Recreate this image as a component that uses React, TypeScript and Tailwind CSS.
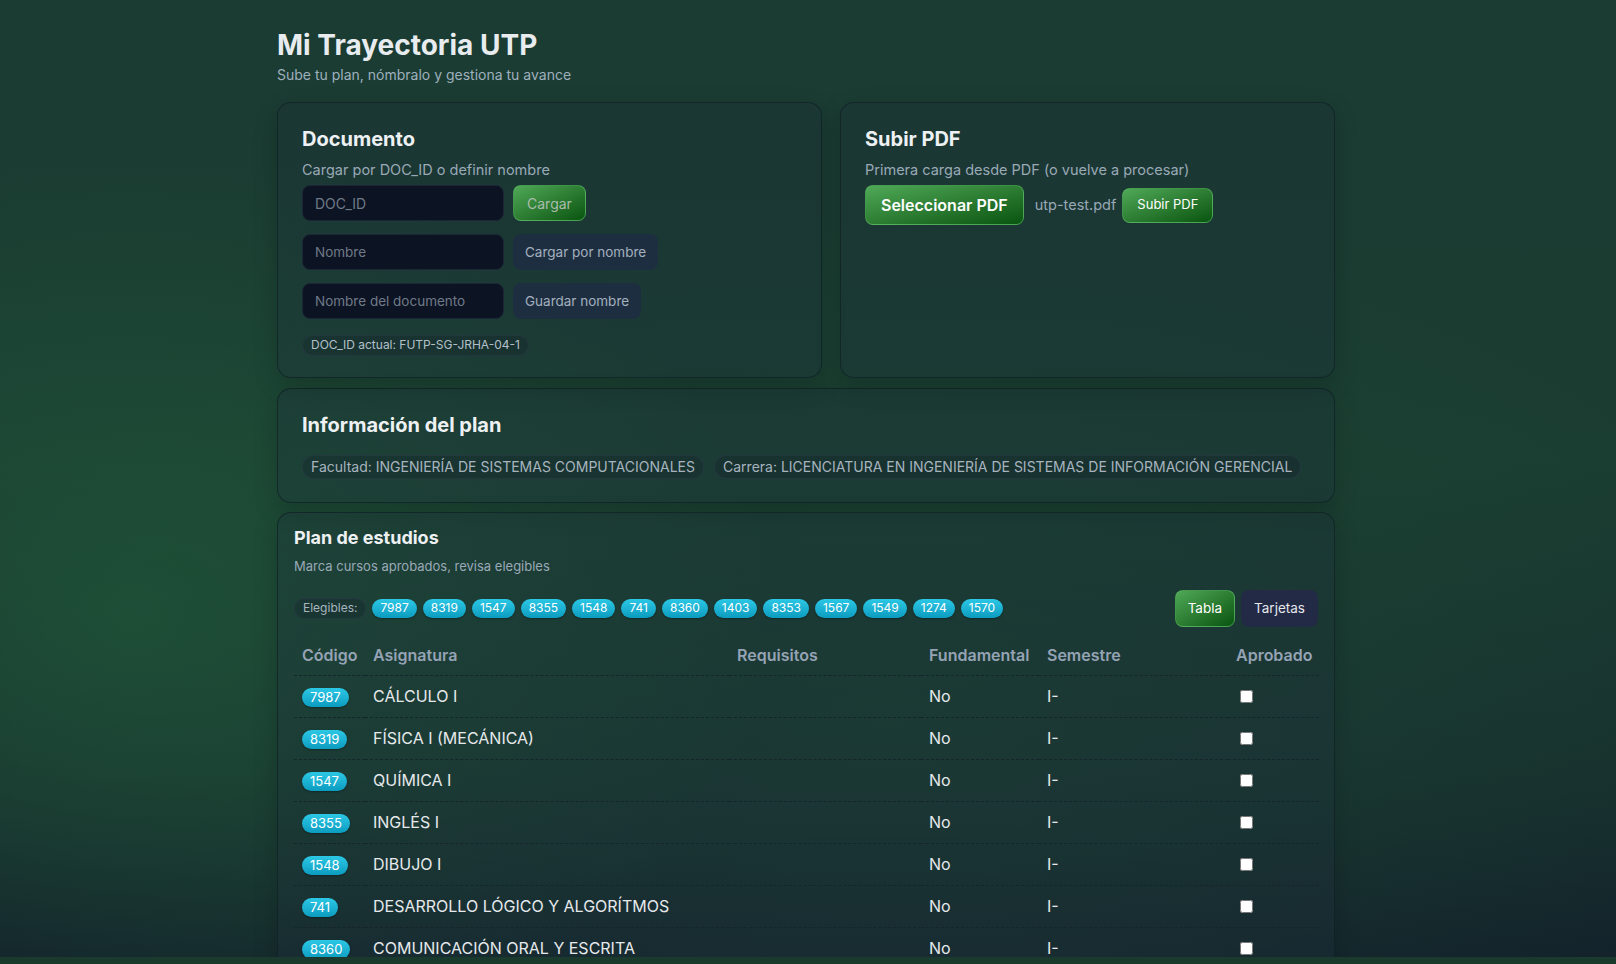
import { useState } from "react";

type Course = {
  code: string;
  name: string;
  fundamental: string;
  semester: string;
};

const courses: Course[] = [
  { code: "7987", name: "CÁLCULO I", fundamental: "No", semester: "I-" },
  { code: "8319", name: "FÍSICA I (MECÁNICA)", fundamental: "No", semester: "I-" },
  { code: "1547", name: "QUÍMICA I", fundamental: "No", semester: "I-" },
  { code: "8355", name: "INGLÉS I", fundamental: "No", semester: "I-" },
  { code: "1548", name: "DIBUJO I", fundamental: "No", semester: "I-" },
  { code: "741", name: "DESARROLLO LÓGICO Y ALGORÍTMOS", fundamental: "No", semester: "I-" },
  { code: "8360", name: "COMUNICACIÓN ORAL Y ESCRITA", fundamental: "No", semester: "I-" },
];

const elegibles = [
  "7987", "8319", "1547", "8355", "1548", "741", "8360",
  "1403", "8353", "1567", "1549", "1274", "1570",
];

const card =
  "rounded-[14px] border border-[#0f1f24]/70 bg-[#1e2f3b]/30 shadow-[0_8px_24px_rgba(0,0,0,0.18)]";

const chip =
  "inline-flex items-center rounded-full bg-gradient-to-b from-[#2cc8e6] to-[#0a9cc0] px-2 text-white shadow-[0_1px_2px_rgba(0,0,0,0.3)]";

const pill =
  "inline-flex items-center whitespace-nowrap rounded-full border border-[#2a3a44]/70 bg-[#15262a]/40";

const greenBtn =
  "rounded-lg border border-[#5cb865]/60 bg-gradient-to-br from-[#4fa957] to-[#07550f]";

export default function App() {
  const [approved, setApproved] = useState<Record<string, boolean>>({});
  const [view, setView] = useState<"tabla" | "tarjetas">("tabla");

  return (
    <div className="min-h-screen bg-[radial-gradient(ellipse_40%_45%_at_8%_60%,rgba(34,96,60,0.55)_0%,transparent_100%),radial-gradient(ellipse_60%_50%_at_55%_70%,rgba(30,80,55,0.45)_0%,transparent_100%),linear-gradient(180deg,#1b3c33_0%,#1a3d31_45%,#172f2e_75%,#111a29_100%)] pr-1 font-['Inter',sans-serif] text-[#e5e7eb]">
      <div className="mx-auto w-[1058px] pt-[28px] pb-10">
        <h1 className="text-[28px] font-bold leading-[35px] text-[#e8ecef]">Mi Trayectoria UTP</h1>
        <p className="mt-[2px] text-[14px] leading-5 text-[#9fb0bd]">
          Sube tu plan, nómbralo y gestiona tu avance
        </p>

        <div className="mt-[17px] grid grid-cols-[545px_495px] gap-[18px]">
          {/* Documento */}
          <section className={`${card} px-6 pt-[22px] pb-[21px]`}>
            <h2 className="text-[20px] font-bold leading-7 text-[#eef1f3]">Documento</h2>
            <p className="mt-[7px] text-[14.5px] leading-5 text-[#9aa9b6]">
              Cargar por DOC_ID o definir nombre
            </p>
            <div className="mt-[5px] flex flex-col gap-[13px]">
              <div className="flex items-center gap-[9px]">
                <input
                  placeholder="DOC_ID"
                  className="h-9 w-[202px] rounded-lg border border-[#1c2636] bg-[#0c1322] px-3 text-[14px] text-[#cbd5e1] outline-none placeholder:text-[#6f7a88]"
                />
                <button className={`${greenBtn} h-9 px-[13px] text-[14px] text-[#a9bcac]`}>
                  Cargar
                </button>
              </div>
              <div className="flex items-center gap-[9px]">
                <input
                  placeholder="Nombre"
                  className="h-9 w-[202px] rounded-lg border border-[#1c2636] bg-[#0c1322] px-3 text-[13.5px] text-[#cbd5e1] outline-none placeholder:text-[#6f7a88]"
                />
                <button className="h-9 rounded-lg bg-[#1f2e42]/90 px-3 text-[13.5px] text-[#a3b0be]">
                  Cargar por nombre
                </button>
              </div>
              <div className="flex items-center gap-[9px]">
                <input
                  placeholder="Nombre del documento"
                  className="h-9 w-[202px] rounded-lg border border-[#1c2636] bg-[#0c1322] px-3 text-[13.5px] text-[#cbd5e1] outline-none placeholder:text-[#6f7a88]"
                />
                <button className="h-9 rounded-lg bg-[#1f2e42]/90 px-3 text-[13.5px] text-[#a3b0be]">
                  Guardar nombre
                </button>
              </div>
            </div>
            <div className="mt-3">
              <span className={`${pill} h-[21px] px-2 text-[12px] text-[#b4c0c9]`}>
                DOC_ID actual: FUTP-SG-JRHA-04-1
              </span>
            </div>
          </section>

          {/* Subir PDF */}
          <section className={`${card} px-6 pt-[22px] pb-[21px]`}>
            <h2 className="text-[20px] font-bold leading-7 text-[#eef1f3]">Subir PDF</h2>
            <p className="mt-[7px] text-[14.5px] leading-5 text-[#9aa9b6]">
              Primera carga desde PDF (o vuelve a procesar)
            </p>
            <div className="mt-[5px] flex items-center gap-3">
              <button className={`${greenBtn} h-10 px-[15px] text-[16px] font-semibold text-white`}>
                Seleccionar PDF
              </button>
              <span className="-ml-[1px] text-[14.5px] text-[#9aa9b6]">utp-test.pdf</span>
              <button className={`${greenBtn} -ml-[6px] h-[35px] px-[14px] text-[13px] text-white`}>
                Subir PDF
              </button>
            </div>
          </section>
        </div>

        {/* Información del plan */}
        <section className={`${card} mt-[10px] px-6 pt-[22px] pb-[23px]`}>
          <h2 className="text-[20px] font-bold leading-7 text-[#eef1f3]">Información del plan</h2>
          <div className="mt-[16px] flex items-center gap-[10px]">
            <span className={`${pill} h-6 px-2 text-[14px] text-[#a7b4bf]`}>
              Facultad: INGENIERÍA DE SISTEMAS COMPUTACIONALES
            </span>
            <span className={`${pill} h-6 px-2 text-[14px] text-[#a7b4bf]`}>
              Carrera: LICENCIATURA EN INGENIERÍA DE SISTEMAS DE INFORMACIÓN GERENCIAL
            </span>
          </div>
        </section>

        {/* Plan de estudios */}
        <section className={`${card} mt-[9px] px-4 pt-[11px] pb-4`}>
          <h2 className="text-[18px] font-bold leading-7 text-[#eef1f3]">Plan de estudios</h2>
          <p className="mt-[4px] text-[13px] leading-5 text-[#9aa9b6]">
            Marca cursos aprobados, revisa elegibles
          </p>
          <div className="mt-[14px] flex items-center justify-between">
            <div className="flex items-center gap-[6px]">
              <span className={`${pill} h-[21px] px-2 text-[12px] text-[#a7b4bf]`}>Elegibles:</span>
              {elegibles.map((c) => (
                <span key={c} className={`${chip} h-[19px] text-[12px]`}>
                  {c}
                </span>
              ))}
            </div>
            <div className="flex items-center gap-[6px]">
              <button
                onClick={() => setView("tabla")}
                className={
                  view === "tabla"
                    ? `${greenBtn} h-[37px] px-[12px] text-[13.5px] text-white`
                    : "h-[37px] rounded-lg bg-[#232a46] px-[13px] text-[13.5px] text-[#e5e7eb]"
                }
              >
                Tabla
              </button>
              <button
                onClick={() => setView("tarjetas")}
                className={
                  view === "tarjetas"
                    ? `${greenBtn} h-[37px] px-[12px] text-[13.5px] text-white`
                    : "h-[37px] rounded-lg bg-[#232a46] px-[13px] text-[13.5px] text-[#e5e7eb]"
                }
              >
                Tarjetas
              </button>
            </div>
          </div>

          <table className="mt-[8px] w-full table-fixed text-left">
            <colgroup>
              <col className="w-[71px]" />
              <col className="w-[364px]" />
              <col className="w-[192px]" />
              <col className="w-[118px]" />
              <col className="w-[189px]" />
              <col className="w-[91px]" />
            </colgroup>
            <thead>
              <tr className="border-b border-dashed border-[#14262b]">
                {["Código", "Asignatura", "Requisitos", "Fundamental", "Semestre", "Aprobado"].map((h) => (
                  <th key={h} className="px-2 py-2 text-[16px] font-semibold leading-6 text-[#95a3b5]">
                    {h}
                  </th>
                ))}
              </tr>
            </thead>
            <tbody>
              {courses.map((c) => (
                <tr key={c.code} className="border-b border-dashed border-[#14262b]">
                  <td className="px-2 py-[8.5px] leading-6">
                    <span className={`${chip} h-[19px] text-[13px]`}>{c.code}</span>
                  </td>
                  <td className="px-2 py-[8.5px] text-[16px] leading-6 text-[#e6e9ec]">{c.name}</td>
                  <td className="px-2 py-[8.5px]"></td>
                  <td className="px-2 py-[8.5px] text-[16px] leading-6 text-[#e6e9ec]">{c.fundamental}</td>
                  <td className="px-2 py-[8.5px] text-[16px] leading-6 text-[#e6e9ec]">{c.semester}</td>
                  <td className="px-2 py-[8.5px] leading-6">
                    <input
                      type="checkbox"
                      checked={!!approved[c.code]}
                      onChange={(e) => setApproved({ ...approved, [c.code]: e.target.checked })}
                      className="m-0 ml-1 -mt-[3px] h-[13px] w-[13px] align-middle"
                    />
                  </td>
                </tr>
              ))}
            </tbody>
          </table>
        </section>
      </div>
      <div className="fixed inset-x-0 bottom-0 h-[7px] bg-[#1b3a2e]"></div>
    </div>
  );
}
